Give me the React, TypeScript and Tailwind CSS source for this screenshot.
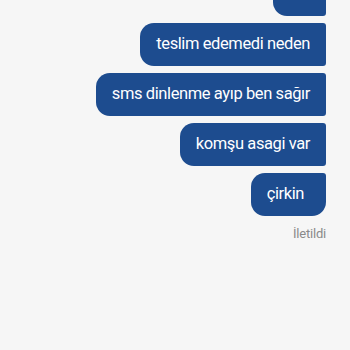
export default function App() {
  const msgs = ['abi', 'teslim edemedi neden', 'sms dinlenme ayıp ben sağır', 'komşu asagi var', 'çirkin']
  return (
    <div className="w-[350px] h-[350px] overflow-hidden bg-[#f6f6f6] font-['Roboto',sans-serif]">
      <div className="flex flex-col items-end gap-[7px] pr-6 -mt-[27px]">
        {msgs.map((m, i) => (
          <div
            key={i}
            className={`h-[43px] flex items-center bg-[#1d4c8f] text-white text-[16.5px] tracking-[-0.4px] rounded-l-[14px] ${i === msgs.length - 1 ? 'pl-4 pr-[22px] rounded-tr-[3px] rounded-br-[14px]' : 'px-4 rounded-r-[3px]'}`}
          >
            {m}
          </div>
        ))}
        <div className="text-[13px] tracking-[-0.2px] text-[#8a8a8a] mt-[1px]">İletildi</div>
      </div>
    </div>
  )
}
